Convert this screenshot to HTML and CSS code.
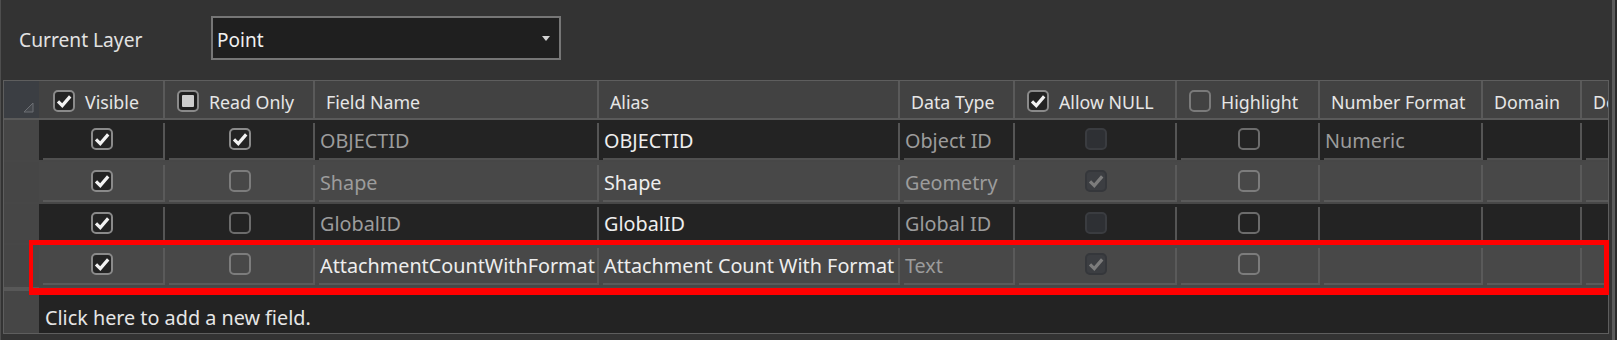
FILE: index.html
```html
<!DOCTYPE html>
<html>
<head>
<meta charset="utf-8">
<title>Fields</title>
<link rel="stylesheet" href="styles.css">
</head>
<body>
<div class="pane">
  <div class="top">
    <span class="lbl">Current Layer</span>
    <div class="combo"><span class="combo-val">Point</span><span class="caret"></span></div>
  </div>

  <div class="grid">
    <div class="hrow">
      <div class="hc corner"><svg class="tri" viewBox="0 0 11 11"><path d="M10 1 V10 H1 Z"/></svg></div>
      <div class="hc c-vis cbh first"><svg class="cb on" viewBox="0 0 22 22"><rect x="1" y="1" width="20" height="20" rx="4"/><path d="M5 11.3l4.3 4.3 7.9-9.2"/></svg><span class="ht">Visible</span></div>
      <div class="hc c-ro cbh"><svg class="cb ind" viewBox="0 0 22 22"><rect x="1" y="1" width="20" height="20" rx="4"/><rect class="sq" x="5" y="5" width="12" height="12" rx="1"/></svg><span class="ht">Read Only</span></div>
      <div class="hc c-fn"><span class="ht">Field Name</span></div>
      <div class="hc c-al"><span class="ht">Alias</span></div>
      <div class="hc c-dt"><span class="ht">Data Type</span></div>
      <div class="hc c-an cbh"><svg class="cb on" viewBox="0 0 22 22"><rect x="1" y="1" width="20" height="20" rx="4"/><path d="M5 11.3l4.3 4.3 7.9-9.2"/></svg><span class="ht">Allow NULL</span></div>
      <div class="hc c-hl cbh"><svg class="cb hoff" viewBox="0 0 22 22"><rect x="1" y="1" width="20" height="20" rx="4"/></svg><span class="ht">Highlight</span></div>
      <div class="hc c-nf"><span class="ht">Number Format</span></div>
      <div class="hc c-dm"><span class="ht">Domain</span></div>
      <div class="hc c-df"><span class="ht">Default</span></div>
    </div>

    <div class="row dark">
      <div class="rh"></div>
      <div class="cell mid c-vis"><svg class="cb on" viewBox="0 0 22 22"><rect x="1" y="1" width="20" height="20" rx="4"/><path d="M5 11.3l4.3 4.3 7.9-9.2"/></svg></div>
      <div class="cell mid c-ro"><svg class="cb on" viewBox="0 0 22 22"><rect x="1" y="1" width="20" height="20" rx="4"/><path d="M5 11.3l4.3 4.3 7.9-9.2"/></svg></div>
      <div class="cell c-fn dim">OBJECTID</div>
      <div class="cell c-al lit">OBJECTID</div>
      <div class="cell c-dt dim">Object ID</div>
      <div class="cell mid c-an"><svg class="cb dis" viewBox="0 0 22 22"><rect x="1" y="1" width="20" height="20" rx="4"/></svg></div>
      <div class="cell mid c-hl"><svg class="cb off" viewBox="0 0 22 22"><rect x="1" y="1" width="20" height="20" rx="4"/></svg></div>
      <div class="cell c-nf dim">Numeric</div>
      <div class="cell c-dm"></div>
      <div class="cell c-df"></div>
    </div>

    <div class="row gray">
      <div class="rh"></div>
      <div class="cell mid c-vis"><svg class="cb on" viewBox="0 0 22 22"><rect x="1" y="1" width="20" height="20" rx="4"/><path d="M5 11.3l4.3 4.3 7.9-9.2"/></svg></div>
      <div class="cell mid c-ro"><svg class="cb off" viewBox="0 0 22 22"><rect x="1" y="1" width="20" height="20" rx="4"/></svg></div>
      <div class="cell c-fn dim">Shape</div>
      <div class="cell c-al lit">Shape</div>
      <div class="cell c-dt dim">Geometry</div>
      <div class="cell mid c-an"><svg class="cb dison" viewBox="0 0 22 22"><rect x="1" y="1" width="20" height="20" rx="4"/><path d="M5 11.3l4.3 4.3 7.9-9.2"/></svg></div>
      <div class="cell mid c-hl"><svg class="cb off" viewBox="0 0 22 22"><rect x="1" y="1" width="20" height="20" rx="4"/></svg></div>
      <div class="cell c-nf"></div>
      <div class="cell c-dm"></div>
      <div class="cell c-df"></div>
    </div>

    <div class="row dark short">
      <div class="rh"></div>
      <div class="cell mid c-vis"><svg class="cb on" viewBox="0 0 22 22"><rect x="1" y="1" width="20" height="20" rx="4"/><path d="M5 11.3l4.3 4.3 7.9-9.2"/></svg></div>
      <div class="cell mid c-ro"><svg class="cb off" viewBox="0 0 22 22"><rect x="1" y="1" width="20" height="20" rx="4"/></svg></div>
      <div class="cell c-fn dim">GlobalID</div>
      <div class="cell c-al lit">GlobalID</div>
      <div class="cell c-dt dim">Global ID</div>
      <div class="cell mid c-an"><svg class="cb dis" viewBox="0 0 22 22"><rect x="1" y="1" width="20" height="20" rx="4"/></svg></div>
      <div class="cell mid c-hl"><svg class="cb off" viewBox="0 0 22 22"><rect x="1" y="1" width="20" height="20" rx="4"/></svg></div>
      <div class="cell c-nf"></div>
      <div class="cell c-dm"></div>
      <div class="cell c-df"></div>
    </div>

    <div class="row gray">
      <div class="rh"></div>
      <div class="cell mid c-vis"><svg class="cb on" viewBox="0 0 22 22"><rect x="1" y="1" width="20" height="20" rx="4"/><path d="M5 11.3l4.3 4.3 7.9-9.2"/></svg></div>
      <div class="cell mid c-ro"><svg class="cb off" viewBox="0 0 22 22"><rect x="1" y="1" width="20" height="20" rx="4"/></svg></div>
      <div class="cell c-fn lit">AttachmentCountWithFormat</div>
      <div class="cell c-al lit">Attachment Count With Format</div>
      <div class="cell c-dt dim">Text</div>
      <div class="cell mid c-an"><svg class="cb dison" viewBox="0 0 22 22"><rect x="1" y="1" width="20" height="20" rx="4"/><path d="M5 11.3l4.3 4.3 7.9-9.2"/></svg></div>
      <div class="cell mid c-hl"><svg class="cb off" viewBox="0 0 22 22"><rect x="1" y="1" width="20" height="20" rx="4"/></svg></div>
      <div class="cell c-nf"></div>
      <div class="cell c-dm"></div>
      <div class="cell c-df"></div>
    </div>

    <div class="sep"><div class="rh"></div></div>

    <div class="newrow">
      <div class="rh"></div>
      <div class="newtext">Click here to add a new field.</div>
    </div>
  </div>
</div>
<div class="redbox"></div>
</body>
</html>
```
FILE: styles.css
```css
* { box-sizing: border-box; }

body {
  margin: 0;
  width: 1617px;
  height: 340px;
  overflow: hidden;
  background: #2a2a2a;
  font-family: "Noto Sans", "Open Sans", sans-serif;
}

.pane {
  width: 1615px;
  height: 340px;
  background: #333333;
  border-left: 1px solid #4e4e4e;
  border-right: 3px solid #5b5b5b;
  padding-top: 16px;
}

/* top bar */
.top {
  display: flex;
  align-items: center;
  height: 44px;
  padding-left: 18px;
}
.lbl {
  width: 192px;
  flex: none;
  font-size: 19.2px;
  color: #e2e2e2;
  padding-top: 3px;
}
.combo {
  width: 350px;
  height: 44px;
  flex: none;
  border: 2px solid #767676;
  background: #1f1f1f;
  display: flex;
  align-items: center;
  justify-content: space-between;
  padding: 3px 9px 0 4px;
}
.combo-val { font-size: 19px; color: #f0f0f0; }
.caret {
  width: 0;
  height: 0;
  border-left: 4px solid transparent;
  border-right: 4px solid transparent;
  border-top: 5px solid #d4d4d4;
  margin-top: -3px;
}

/* grid */
.grid {
  margin: 20px 0 0 2px;
  width: 1606px;
  border: 1px solid #5e5e5e;
  overflow: hidden;
}

.c-vis { width: 126px; }
.c-ro  { width: 150px; }
.c-fn  { width: 284px; }
.c-al  { width: 301px; }
.c-dt  { width: 115px; }
.c-an  { width: 162px; }
.c-hl  { width: 143px; }
.c-nf  { width: 163px; }
.c-dm  { width: 99px; }
.c-df  { width: 120px; }

.hrow {
  display: flex;
  height: 39px;
  background: #424242;
  border-bottom: 2px solid #5a5a5a;
}
.hc {
  flex: none;
  display: flex;
  align-items: center;
  border-right: 2px solid #5a5a5a;
  padding-left: 11px;
  font-size: 17.8px;
  color: #e6e6e6;
  white-space: nowrap;
  overflow: hidden;
}
.hc.cbh { padding-left: 12px; }
.hc.first { padding-left: 14px; }
.hc .cb { margin: 3px 10px 0 0; }
.ht { padding-top: 5px; }

.corner {
  width: 35px;
  background: #3b3e43;
  border-right: none;
  align-items: flex-end;
  justify-content: flex-end;
  padding: 0 5px 5px 0;
}
.tri { width: 11px; height: 11px; }
.tri path { fill: #45484d; stroke: #6c6f74; stroke-width: 1; }

.row {
  display: flex;
  height: 42px;
  border-bottom: 2px solid #474747;
}
.row.short { height: 41px; }
.row.dark { background: #232323; }
.row.gray { background: #484848; }

.rh {
  width: 35px;
  flex: none;
  background: #464646;
}

.cell {
  flex: none;
  position: relative;
  display: flex;
  align-items: center;
  padding: 2px 0 2px 5px;
  font-size: 19.8px;
  white-space: nowrap;
  overflow: hidden;
}
.cell::before {
  content: "";
  position: absolute;
  right: 0;
  top: 3px;
  bottom: 0;
  width: 2px;
  background: #555555;
}
.cell::after {
  content: "";
  position: absolute;
  left: 4px;
  right: 2px;
  bottom: 0;
  height: 2px;
  background: #505050;
}
.row.gray .cell::before,
.row.gray .cell::after { background: #5a5a5a; }

.cell.mid { justify-content: center; padding-left: 0; padding-top: 0; }

.dim { color: #9c9c9c; }
.lit { color: #eeeeee; }

.sep {
  display: flex;
  height: 4px;
  background: #4a4a4a;
}
.sep .rh { background: #585858; }

.newrow {
  display: flex;
  height: 42px;
  background: #232323;
}
.newtext {
  display: flex;
  align-items: center;
  padding: 10px 0 0 6px;
  font-size: 19.8px;
  color: #e6e6e6;
  white-space: nowrap;
}

/* checkboxes */
.cb { width: 22px; height: 22px; flex: none; display: block; }
.cb rect { stroke-width: 2; }
.cb path { fill: none; stroke-width: 3.2; stroke-linecap: butt; stroke-linejoin: miter; }

.cb.on rect { fill: #232323; stroke: #8a8a8a; }
.cb.on path { stroke: #f2f2f2; }

.cb.ind rect { fill: #1f1f1f; stroke: #8a8a8a; }
.cb.ind rect.sq { fill: #cccccc; stroke: none; }

.cb.hoff rect { fill: none; stroke: #7a7a7a; }
.cb.off rect { fill: none; stroke: #6c6c6c; }
.row.gray .cb.off rect { stroke: #7c7c7c; }

.cb.dis rect { fill: #2e3034; stroke: #3a3c40; }
.cb.dison rect { fill: #3c3e42; stroke: #35373b; }
.cb.dison path { stroke: #7c7c7c; }

/* annotation */
.redbox {
  position: absolute;
  left: 29px;
  top: 240px;
  width: 1580px;
  height: 55px;
  border-style: solid;
  border-color: #ff0000;
  border-width: 5px 5px 7px 4px;
  pointer-events: none;
}
```
